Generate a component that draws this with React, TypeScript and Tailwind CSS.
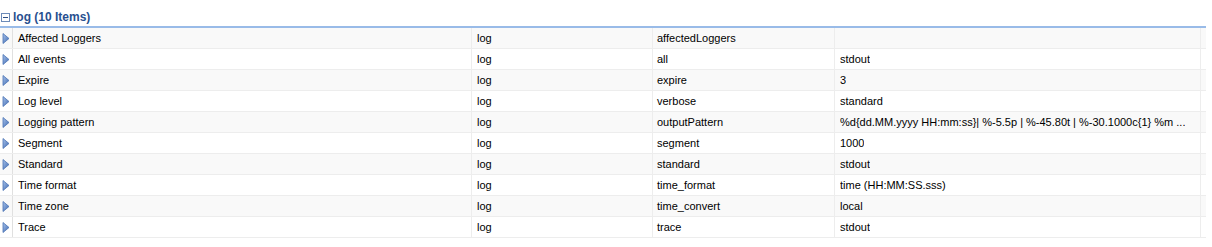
import React from "react";

const rows: [string, string, string, string][] = [
  ["Affected Loggers", "log", "affectedLoggers", ""],
  ["All events", "log", "all", "stdout"],
  ["Expire", "log", "expire", "3"],
  ["Log level", "log", "verbose", "standard"],
  ["Logging pattern", "log", "outputPattern", "%d{dd.MM.yyyy HH:mm:ss}| %-5.5p | %-45.80t | %-30.1000c{1} %m ..."],
  ["Segment", "log", "segment", "1000"],
  ["Standard", "log", "standard", "stdout"],
  ["Time format", "log", "time_format", "time (HH:MM:SS.sss)"],
  ["Time zone", "log", "time_convert", "local"],
  ["Trace", "log", "trace", "stdout"],
];

function Arrow() {
  return (
    <svg width="8" height="11" viewBox="0 0 8 11">
      <defs>
        <linearGradient id="ag" x1="0" y1="0" x2="1" y2="1">
          <stop offset="0" stopColor="#a9c4ec" />
          <stop offset="1" stopColor="#3d68b0" />
        </linearGradient>
      </defs>
      <polygon points="1,0.5 7,5.5 1,10.5" fill="url(#ag)" stroke="#4a72b4" strokeWidth="0.8" />
    </svg>
  );
}

function Minus() {
  return (
    <svg width="9" height="9" viewBox="0 0 9 9">
      <rect x="0.5" y="0.5" width="8" height="8" fill="#fff" stroke="#6d8bb8" />
      <line x1="2" y1="4.5" x2="7" y2="4.5" stroke="#2c4f86" strokeWidth="1" />
    </svg>
  );
}

export default function App() {
  return (
    <div className="w-[1212px] h-[247px] bg-white font-['Liberation_Sans',Arial,sans-serif] text-[11px] text-black">
      <div className="w-[1206px] h-[28px] border-b-2 border-[#99bbe8] flex items-end pb-[2px] pl-[1px] gap-[3px]">
        <div className="mb-[2px]"><Minus /></div>
        <span className="font-bold text-[12px] leading-[14px] text-[#28508f]">log (10 Items)</span>
      </div>
      <div className="w-[1206px]">
        {rows.map((r, i) => (
          <div
            key={i}
            className={`flex h-[21px] border-b border-[#ededed] ${i % 2 === 0 ? "bg-[#f9f9f9]" : "bg-white"}`}
          >
            <div className="w-[13px] shrink-0 border-r border-[#e0e0e0] flex items-center pl-[2px]">
              <Arrow />
            </div>
            <div className="w-[459px] shrink-0 border-r border-[#ededed] flex items-center pl-[5px] whitespace-nowrap overflow-hidden">{r[0]}</div>
            <div className="w-[181px] shrink-0 border-r border-[#ededed] flex items-center pl-[5px] whitespace-nowrap overflow-hidden">{r[1]}</div>
            <div className="w-[182px] shrink-0 border-r border-[#ededed] flex items-center pl-[4px] whitespace-nowrap overflow-hidden">{r[2]}</div>
            <div className="w-[366px] shrink-0 border-r border-[#ededed] flex items-center pl-[5px] pr-[6px] whitespace-nowrap overflow-hidden">
              <span className="block overflow-hidden text-ellipsis whitespace-nowrap">{r[3]}</span>
            </div>
            <div className="w-[5px] shrink-0" />
          </div>
        ))}
      </div>
    </div>
  );
}
